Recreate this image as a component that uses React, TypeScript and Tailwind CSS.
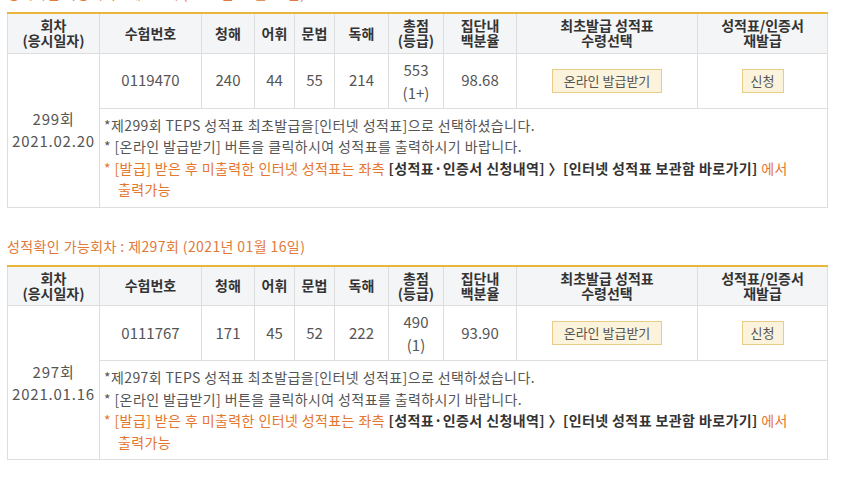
const rows = [
  {
    title: "성적확인 가능회차 : 제299회 (2021년 02월 20일)",
    round: "299회",
    date: "2021.02.20",
    id: "0119470",
    lc: "240",
    voca: "44",
    gram: "55",
    rc: "214",
    total: "553",
    grade: "(1+)",
    pct: "98.68",
  },
  {
    title: "성적확인 가능회차 : 제297회 (2021년 01월 16일)",
    round: "297회",
    date: "2021.01.16",
    id: "0111767",
    lc: "171",
    voca: "45",
    gram: "52",
    rc: "222",
    total: "490",
    grade: "(1)",
    pct: "93.90",
  },
];

const th = "border-r border-[#dedede] last:border-r-0 font-bold text-[14px] text-[#333] leading-[15px] align-middle text-center";
const td = "border-r border-[#dedede] text-center align-middle";

const ScoreTable = ({ r }) => {
  return (
    <table className="w-[820px] table-fixed border-collapse border-t-2 border-t-[#e7b63b] border-x border-b border-[#dedede] text-[15px]">
      <colgroup>
        <col className="w-[92px]" />
        <col className="w-[102px]" />
        <col className="w-[53px]" />
        <col className="w-[40px]" />
        <col className="w-[40px]" />
        <col className="w-[54px]" />
        <col className="w-[55px]" />
        <col className="w-[73px]" />
        <col className="w-[181px]" />
        <col className="w-[130px]" />
      </colgroup>
      <thead>
        <tr className="h-[40px] bg-[#f4f5f7] border-b border-[#dedede]">
          <th className={th}>회차<br />(응시일자)</th>
          <th className={th}>수험번호</th>
          <th className={th}>청해</th>
          <th className={th}>어휘</th>
          <th className={th}>문법</th>
          <th className={th}>독해</th>
          <th className={th}>총점<br />(등급)</th>
          <th className={th}>집단내<br />백분율</th>
          <th className={th}>최초발급 성적표<br />수령선택</th>
          <th className={th}>성적표/인증서<br />재발급</th>
        </tr>
      </thead>
      <tbody className="text-[#555]">
        <tr className="h-[55px] border-b border-[#dedede]">
          <td rowSpan={2} className={td + " leading-[22px] tracking-[0.8px]"}>
            {r.round}
            <br />
            {r.date}
          </td>
          <td className={td}>{r.id}</td>
          <td className={td}>{r.lc}</td>
          <td className={td}>{r.voca}</td>
          <td className={td}>{r.gram}</td>
          <td className={td}>{r.rc}</td>
          <td className={td + " leading-[23px]"}>
            {r.total}
            <br />
            {r.grade}
          </td>
          <td className={td}>{r.pct}</td>
          <td className={td}>
            <button className="h-[24px] w-[110px] border border-[#e9cd86] bg-[#fcf3dd] text-[13px] text-[#555]">
              온라인 발급받기
            </button>
          </td>
          <td className="text-center align-middle">
            <button className="h-[24px] w-[42px] border border-[#e9cd86] bg-[#fcf3dd] text-[13px] text-[#555]">
              신청
            </button>
          </td>
        </tr>
        <tr className="h-[99px]">
          <td colSpan={9} className="align-middle pl-[4px] pr-[20px] text-[14px] tracking-[0.4px] leading-[21.5px] text-[#555] break-keep">
            <p>*제{r.round} TEPS 성적표 최초발급을[인터넷 성적표]으로 선택하셨습니다.</p>
            <p>* [온라인 발급받기] 버튼을 클릭하시여 성적표를 출력하시기 바랍니다.</p>
            <p className="pl-[14px] -indent-[14px] text-[#e5762e]">
              * [발급] 받은 후 미출력한 인터넷 성적표는 좌측{" "}
              <b className="text-[#333]">[성적표·인증서 신청내역] 〉[인터넷 성적표 보관함 바로가기]</b> 에서 출력가능
            </p>
          </td>
        </tr>
      </tbody>
    </table>
  );
};

export default function App() {
  return (
    <div className="w-[850px] h-[482px] overflow-hidden bg-white font-['Noto_Sans_CJK_KR','Noto_Sans',sans-serif]">
      <div className="-mt-[17px] pl-[7px]">
        {rows.map((r, i) => (
          <section key={i} className={i > 0 ? "mt-[28px]" : ""}>
            <h3 className="h-[20px] mb-[9px] text-[14px] tracking-[0.4px] leading-[20px] text-[#e0793a]">{r.title}</h3>
            <ScoreTable r={r} />
          </section>
        ))}
      </div>
    </div>
  );
}
